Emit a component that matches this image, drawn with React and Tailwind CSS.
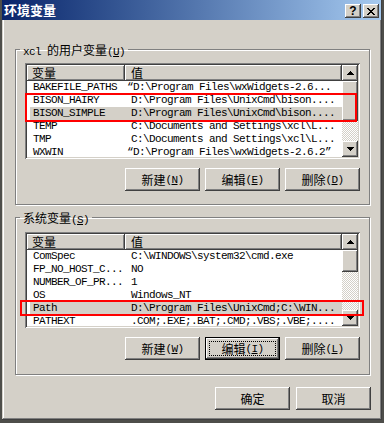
const raised = "shadow-[inset_-1px_-1px_#404040,inset_1px_1px_#ffffff,inset_-2px_-2px_#808080,inset_2px_2px_#d4d0c8]";
const sunken = "shadow-[inset_1px_1px_#808080,inset_-1px_-1px_#ffffff,inset_2px_2px_#404040,inset_-2px_-2px_#d4d0c8]";
const mono = "font-['Liberation_Mono','Noto_Sans_CJK_SC',monospace] text-[11px] tracking-[-0.6px]";
const zh = "font-['Noto_Sans_CJK_SC',sans-serif] text-[12px] tracking-normal";

const userVars = [
  { name: 'BAKEFILE_PATHS', value: 'D:\\Program Files\\wxWidgets-2.6...', quoted: true },
  { name: 'BISON_HAIRY', value: 'D:\\Program Files\\UnixCmd\\bison....' },
  { name: 'BISON_SIMPLE', value: 'D:\\Program Files\\UnixCmd\\bison....', selected: true },
  { name: 'TEMP', value: 'C:\\Documents and Settings\\xcl\\L...' },
  { name: 'TMP', value: 'C:\\Documents and Settings\\xcl\\L...' },
  { name: 'WXWIN', value: 'D:\\Program Files\\wxWidgets-2.6.2”', quoted: true }
];

const sysVars = [
  { name: 'ComSpec', value: 'C:\\WINDOWS\\system32\\cmd.exe' },
  { name: 'FP_NO_HOST_C...', value: 'NO' },
  { name: 'NUMBER_OF_PR...', value: '1' },
  { name: 'OS', value: 'Windows_NT' },
  { name: 'Path', value: 'D:\\Program Files\\UnixCmd;C:\\WIN...', selected: true },
  { name: 'PATHEXT', value: '.COM;.EXE;.BAT;.CMD;.VBS;.VBE;....' }
];

const Arrow = ({ down }) => (
  <svg width="7" height="4" viewBox="0 0 7 4" className={down ? 'rotate-180' : ''} shapeRendering="crispEdges">
    <path d="M3 0h1v1h-1z M2 1h3v1h-3z M1 2h5v1h-5z M0 3h7v1h-7z" fill="#000" />
  </svg>
);

const Scrollbar = ({ thumb }) => (
  <div className="w-[16px] flex flex-col">
    <div className={`h-[16px] bg-[#d4d0c8] flex items-center justify-center ${raised}`}><Arrow /></div>
    <div className={`bg-[#d4d0c8] ${raised}`} style={{ height: thumb }} />
    <div className="flex-1 bg-[repeating-conic-gradient(#ffffff_0%_25%,#d4d0c8_0%_50%)] bg-[length:2px_2px]" />
    <div className={`h-[16px] bg-[#d4d0c8] flex items-center justify-center ${raised}`}><Arrow down /></div>
  </div>
);

const ListView = ({ rows, thumb }) => (
  <div className={`w-[335px] h-[96px] p-[2px] bg-white ${sunken}`}>
    <div className="flex h-[92px] overflow-hidden">
      <div className="w-[315px] flex flex-col overflow-hidden">
        <div className="flex h-[16px] shrink-0">
          <div className={`w-[98px] pl-[5px] bg-[#d4d0c8] leading-[16px] ${zh} shadow-[inset_-1px_-1px_#404040,inset_1px_1px_#ffffff,inset_-2px_-2px_#808080]`}>变量</div>
          <div className={`flex-1 pl-[6px] bg-[#d4d0c8] leading-[16px] ${zh} shadow-[inset_-1px_-1px_#404040,inset_1px_1px_#ffffff,inset_-2px_-2px_#808080]`}>值</div>
        </div>
        {rows.map((r) => (
          <div key={r.name} className={`ml-[3px] flex h-[13px] shrink-0 leading-[13px] whitespace-pre ${mono} ${r.selected ? 'bg-[#d4d0c8]' : ''}`}>
            <div className="w-[95px] pl-[3px] overflow-hidden">{r.name}</div>
            <div className="flex-1 pl-[6px] overflow-hidden">
              {r.quoted && <span className="ml-[-4px]">“</span>}
              {r.value}
            </div>
          </div>
        ))}
      </div>
      <Scrollbar thumb={thumb} />
    </div>
  </div>
);

const Button = ({ label, hotkey, focused }) => (
  <div className={`w-[75px] h-[23px] bg-[#d4d0c8] flex ${focused ? `border border-black p-[3px] ${raised}` : raised}`}>
    <div className={`flex-1 flex items-center justify-center leading-[12px] ${focused ? 'border border-dotted border-black' : ''}`}>
      <span className={zh}>{label}</span>
      {hotkey && (
        <span className={mono}>(<u>{hotkey}</u>)</span>
      )}
    </div>
  </div>
);

const Group = ({ title, hotkey, rows, thumb, keys, focusIdx, rect, listGap, className }) => (
  <fieldset className={`w-[355px] border border-[#808080] shadow-[inset_1px_1px_#ffffff,1px_1px_#ffffff] pl-[9px] pr-[9px] m-0 ${className}`}>
    <legend className="ml-[-5px] px-[3px] leading-[12px] h-[12px]">
      {title.latin && <span className={mono}>{title.latin}</span>}
      <span className={zh}>{title.zh}</span>
      <span className={mono}>(<u>{hotkey}</u>)</span>
    </legend>
    <div className="relative" style={{ marginTop: listGap }}>
      <ListView rows={rows} thumb={thumb} />
      <div className="absolute border-2 border-[#ff0000]" style={rect} />
    </div>
    <div className="mt-[9px] flex justify-end gap-[5px]">
      <Button label="新建" hotkey={keys[0]} />
      <Button label="编辑" hotkey={keys[1]} focused={focusIdx === 1} />
      <Button label="删除" hotkey={keys[2]} />
    </div>
  </fieldset>
);

export default function App() {
  return (
    <div className="w-[384px] h-[423px] bg-[#4e4e4a] pl-[2px] overflow-hidden text-black">
      <div className="w-[380px] h-[420px] bg-[#d4d0c8] flex flex-col shadow-[inset_-1px_-1px_#404040,inset_1px_1px_#d4d0c8,inset_-2px_-2px_#808080,inset_2px_2px_#ffffff]">
        <div className="h-[20px] mr-[1px] flex items-start bg-linear-to-r from-[#0a246a] to-[#a6caf0]">
          <div className="pl-[2px] pt-[2px] text-white font-bold text-[13px] leading-[16px] font-['Noto_Sans_CJK_SC',sans-serif]">环境变量</div>
          <div className="ml-auto mt-[4px] mr-[2px] flex gap-[2px]">
            <div className={`w-[16px] h-[14px] bg-[#d4d0c8] flex items-center justify-center text-[12px] font-bold leading-[12px] font-['Liberation_Sans',sans-serif] ${raised}`}>?</div>
            <div className={`w-[16px] h-[14px] bg-[#d4d0c8] flex items-center justify-center ${raised}`}>
              <svg width="8" height="7" viewBox="0 0 8 7" shapeRendering="crispEdges">
                <path d="M0 0h2v1h-2z M6 0h2v1h-2z M1 1h2v1h-2z M5 1h2v1h-2z M2 2h4v1h-4z M3 3h2v1h-2z M2 4h4v1h-4z M1 5h2v1h-2z M5 5h2v1h-2z M0 6h2v1h-2z M6 6h2v1h-2z" fill="#000" />
              </svg>
            </div>
          </div>
        </div>
        <div className="ml-[13px] flex flex-col">
          <Group
            className="mt-[23px] pb-[13px]"
            title={{ latin: 'xcl ', zh: '的用户变量' }}
            hotkey="U"
            rows={userVars}
            thumb={40}
            keys={['N', 'E', 'D']}
            listGap={8}
            rect={{ left: 0, top: 30, width: 332, height: 29 }}
          />
          <Group
            className="mt-[6px] pb-[14px]"
            title={{ zh: '系统变量' }}
            hotkey="S"
            rows={sysVars}
            thumb={22}
            keys={['W', 'I', 'L']}
            focusIdx={1}
            listGap={9}
            rect={{ left: -5, top: 68, width: 344, height: 16 }}
          />
        </div>
        <div className="mt-[12px] mr-[11px] flex justify-end gap-[6px]">
          <Button label="确定" />
          <Button label="取消" />
        </div>
      </div>
    </div>
  );
}
